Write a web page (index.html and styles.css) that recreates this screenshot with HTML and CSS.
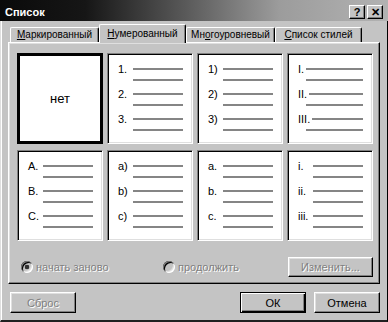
FILE: index.html
```html
<!DOCTYPE html>
<html lang="ru">
<head>
    <meta charset="UTF-8">
    <title>Список</title>
    <link rel="stylesheet" href="styles.css">
</head>
<body>
    <div class="window">
        <div class="titlebar">
            <span class="title">Список</span>
            <span class="tbtn">?</span>
            <span class="tbtn">&#x2715;</span>
        </div>
        <div class="frame">
            <div class="tabs">
                <div class="tab t1"><u>М</u>аркированный</div>
                <div class="tab t2 active"><u>Н</u>умерованный</div>
                <div class="tab t3">Мн<u>о</u>гоуровневый</div>
                <div class="tab t4"><u>С</u>писок стилей</div>
            </div>
            <div class="panel">
                <div class="grid">
                    <div class="cell sel">нет</div>
                    <div class="cell">
                        <div class="item"><div class="row"><span class="num">1.</span><span class="line"></span></div><div class="cont"></div></div>
                        <div class="item"><div class="row"><span class="num">2.</span><span class="line"></span></div><div class="cont"></div></div>
                        <div class="item"><div class="row"><span class="num">3.</span><span class="line"></span></div><div class="cont"></div></div>
                    </div>
                    <div class="cell">
                        <div class="item"><div class="row"><span class="num">1)</span><span class="line"></span></div><div class="cont"></div></div>
                        <div class="item"><div class="row"><span class="num">2)</span><span class="line"></span></div><div class="cont"></div></div>
                        <div class="item"><div class="row"><span class="num">3)</span><span class="line"></span></div><div class="cont"></div></div>
                    </div>
                    <div class="cell roman">
                        <div class="item"><div class="row"><span class="num">I.</span><span class="line"></span></div><div class="cont"></div></div>
                        <div class="item"><div class="row"><span class="num">II.</span><span class="line"></span></div><div class="cont"></div></div>
                        <div class="item"><div class="row"><span class="num">III.</span><span class="line"></span></div><div class="cont"></div></div>
                    </div>
                    <div class="cell">
                        <div class="item"><div class="row"><span class="num">A.</span><span class="line"></span></div><div class="cont"></div></div>
                        <div class="item"><div class="row"><span class="num">B.</span><span class="line"></span></div><div class="cont"></div></div>
                        <div class="item"><div class="row"><span class="num">C.</span><span class="line"></span></div><div class="cont"></div></div>
                    </div>
                    <div class="cell">
                        <div class="item"><div class="row"><span class="num">a)</span><span class="line"></span></div><div class="cont"></div></div>
                        <div class="item"><div class="row"><span class="num">b)</span><span class="line"></span></div><div class="cont"></div></div>
                        <div class="item"><div class="row"><span class="num">c)</span><span class="line"></span></div><div class="cont"></div></div>
                    </div>
                    <div class="cell">
                        <div class="item"><div class="row"><span class="num">a.</span><span class="line"></span></div><div class="cont"></div></div>
                        <div class="item"><div class="row"><span class="num">b.</span><span class="line"></span></div><div class="cont"></div></div>
                        <div class="item"><div class="row"><span class="num">c.</span><span class="line"></span></div><div class="cont"></div></div>
                    </div>
                    <div class="cell">
                        <div class="item"><div class="row"><span class="num">i.</span><span class="line"></span></div><div class="cont"></div></div>
                        <div class="item"><div class="row"><span class="num">ii.</span><span class="line"></span></div><div class="cont"></div></div>
                        <div class="item"><div class="row"><span class="num">iii.</span><span class="line"></span></div><div class="cont"></div></div>
                    </div>
                </div>
                <div class="options">
                    <label class="opt first"><span class="radio checked"></span><span class="dis">начать заново</span></label>
                    <label class="opt"><span class="radio"></span><span class="dis">продолжить</span></label>
                    <span class="btn change"><span class="dis">Изменить...</span></span>
                </div>
            </div>
            <div class="buttons">
                <span class="btn"><span class="dis">Сброс</span></span>
                <span class="spacer"></span>
                <span class="btn default">ОК</span>
                <span class="btn">Отмена</span>
            </div>
        </div>
    </div>
</body>
</html>
```

FILE: styles.css
```css
body {
    margin: 0;
    width: 388px;
    height: 322px;
    overflow: hidden;
    background: #c4c4c4;
    font-family: "Liberation Sans", Arial, sans-serif;
    font-size: 11px;
    color: #000;
}

.window {
    width: 388px;
    height: 322px;
    display: flex;
    flex-direction: column;
}

/* title bar */
.titlebar {
    height: 21px;
    box-sizing: border-box;
    padding: 3px 5px 0 5px;
    display: flex;
    align-items: center;
    gap: 2px;
    background: linear-gradient(90deg, #0a0a0a 0%, #161616 22%, #5a5a5a 48%, #9c9c9c 72%, #b2b2b2 100%);
}
.title {
    flex: 1;
    color: #fff;
    font-weight: bold;
    font-size: 11px;
}
.tbtn {
    width: 16px;
    height: 14px;
    box-sizing: border-box;
    background: #c4c4c4;
    border-top: 1px solid #fff;
    border-left: 1px solid #fff;
    border-right: 1px solid #000;
    border-bottom: 1px solid #000;
    box-shadow: inset -1px -1px 0 #808080;
    font-weight: bold;
    font-size: 11px;
    line-height: 12px;
    text-align: center;
}

/* window body */
.frame {
    flex: 1;
    box-sizing: border-box;
    border-left: 1px solid #dfdfdf;
    box-shadow: inset 1px 0 0 #fff;
    border-right: 1px solid #000;
    border-bottom: 2px solid #202020;
    padding: 3px 7px 0 7px;
}

/* tabs */
.tabs {
    display: flex;
    align-items: flex-end;
    height: 18px;
    padding-left: 2px;
}
.tab {
    height: 15px;
    box-sizing: border-box;
    border-top: 1px solid #fff;
    border-left: 1px solid #fff;
    border-right: 1px solid #000;
    box-shadow: inset -1px 0 0 #808080;
    border-radius: 2px 2px 0 0;
    padding-top: 1px;
    text-align: center;
    font-size: 10px;
    white-space: nowrap;
    overflow: hidden;
}
.t1 { width: 89px; }
.t2 { width: 87px; }
.t3 { width: 89px; }
.t4 { width: 87px; }
.tab.active {
    height: 19px;
    padding-top: 3px;
    position: relative;
    z-index: 1;
    background: #c4c4c4;
    margin-bottom: -1px;
}

/* panel */
.panel {
    width: 372px;
    height: 242px;
    box-sizing: border-box;
    border-top: 1px solid #fff;
    border-left: 1px solid #fff;
    border-right: 1px solid #000;
    border-bottom: 1px solid #000;
    box-shadow: inset -1px -1px 0 #808080, inset 1px 1px 0 #dfdfdf;
    padding: 10px 0 0 8px;
}

.grid {
    display: grid;
    grid-template-columns: repeat(4, 86px);
    grid-template-rows: 91px 91px;
    column-gap: 4px;
    row-gap: 6px;
}

.cell {
    background: #fff;
    box-sizing: border-box;
    border-top: 1px solid #808080;
    border-left: 1px solid #808080;
    border-right: 1px solid #fff;
    border-bottom: 1px solid #fff;
    box-shadow: inset 1px 1px 0 #000, inset -1px -1px 0 #dfdfdf;
    padding: 9px 9px 0 10px;
}
.cell.sel {
    border: 3px solid #000;
    outline: 1px dotted #000;
    outline-offset: -1px;
    box-shadow: none;
    padding: 0;
    display: flex;
    align-items: center;
    justify-content: center;
    font-size: 13px;
}

.item {
    margin-bottom: 7px;
}
.row {
    display: flex;
    align-items: center;
    height: 12px;
}
.num {
    min-width: 15px;
    padding-right: 2px;
    box-sizing: border-box;
    font-size: 11px;
}
.line {
    flex: 1;
    height: 2px;
    background: #858585;
}
.cont {
    height: 2px;
    background: #858585;
    margin: 4px 0 0 15px;
}
.roman .num {
    min-width: 8px;
}
.roman .cont {
    margin-left: 8px;
}

/* bottom of panel */
.options {
    display: flex;
    align-items: center;
    margin-top: 16px;
    padding-left: 4px;
}
.opt {
    display: flex;
    align-items: center;
    gap: 3px;
    flex: 1;
}
.opt.first {
    flex: 0 0 142px;
}
.radio {
    width: 12px;
    height: 12px;
    border-radius: 50%;
    background: #c4c4c4;
    box-shadow: inset 1px 1px 0 #808080, inset -1px -1px 0 #fff, inset 2px 2px 0 #000, inset -2px -2px 0 #dfdfdf;
}
.radio.checked {
    background: radial-gradient(circle, #303030 2px, #c4c4c4 2.6px);
}
.dis {
    color: #808080;
    text-shadow: 1px 1px 0 #fff;
}

.btn {
    display: flex;
    align-items: center;
    justify-content: center;
    width: 66px;
    height: 21px;
    box-sizing: border-box;
    background: #c4c4c4;
    border-top: 1px solid #fff;
    border-left: 1px solid #fff;
    border-right: 1px solid #000;
    border-bottom: 1px solid #000;
    box-shadow: inset -1px -1px 0 #808080, inset 1px 1px 0 #dfdfdf;
}
.btn.change {
    width: 85px;
    height: 20px;
    margin-right: 6px;
}
.btn.default {
    border: 1px solid #000;
    box-shadow: inset 1px 1px 0 #fff, inset -1px -1px 0 #000, inset -2px -2px 0 #808080;
}

.buttons {
    display: flex;
    align-items: center;
    gap: 8px;
    margin-top: 8px;
    padding-left: 2px;
}
.spacer {
    flex: 1;
}
```
